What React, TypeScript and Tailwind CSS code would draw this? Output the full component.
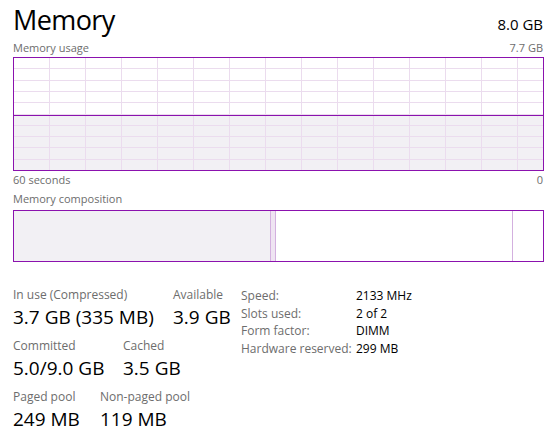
import React from "react";

const font = { fontFamily: '"Open Sans", "Noto Sans", sans-serif' };

function UsageChart() {
  const W = 531;
  const H = 114;
  const vLines: number[] = [];
  for (let x = 36; x < 530; x += 36) vLines.push(x + 0.5);
  const hLines: number[] = [];
  for (let i = 1; i < 10; i++) hLines.push(Math.round(i * 11.3) + 0.5);
  const usageY = 58;
  return (
    <svg width={W} height={H} viewBox={`0 0 ${W} ${H}`} className="block">
      <rect x={0} y={usageY} width={W} height={H - usageY} fill="#f2f0f4" />
      {vLines.map((x) => (
        <line key={"v" + x} x1={x} y1={0} x2={x} y2={H} stroke="#ebdcee" strokeWidth={1} />
      ))}
      {hLines.map((y) => (
        <line key={"h" + y} x1={0} y1={y} x2={W} y2={y} stroke="#ebdcee" strokeWidth={1} />
      ))}
      <line x1={0} y1={usageY + 0.5} x2={W} y2={usageY + 0.5} stroke="#8b12ae" strokeWidth={1} />
      <rect x={0.5} y={0.5} width={W - 1} height={H - 1} fill="none" stroke="#8b12ae" strokeWidth={1} />
    </svg>
  );
}

function Stat({ label, value, width }: { label: string; value: string; width?: string }) {
  return (
    <div className={`flex flex-col ${width ?? ""}`}>
      <div className="text-[12px] leading-[16px] text-[#6d6d6d]">{label}</div>
      <div className="text-[19px] leading-[26px] text-black mt-[1px]">{value}</div>
    </div>
  );
}

export default function App() {
  const rows: [string, string][] = [
    ["Speed:", "2133 MHz"],
    ["Slots used:", "2 of 2"],
    ["Form factor:", "DIMM"],
    ["Hardware reserved:", "299 MB"],
  ];
  return (
    <div className="w-[553px] h-[437px] bg-white overflow-hidden" style={font}>
      <div className="pl-[13px] pr-[10px] pt-[1px] flex flex-col">
        <div className="flex justify-between items-baseline h-[37px]">
          <div className="text-[27px] leading-[37px] font-normal text-black tracking-[-0.6px]">Memory</div>
          <div className="text-[15px] text-black">8.0 GB</div>
        </div>
        <div className="flex justify-between text-[11px] leading-[18px] text-[#6d6d6d] mt-[1px]">
          <span>Memory usage</span>
          <span>7.7 GB</span>
        </div>
        <div>
          <UsageChart />
        </div>
        <div className="flex justify-between text-[11px] leading-[18px] text-[#6d6d6d]">
          <span>60 seconds</span>
          <span>0</span>
        </div>
        <div className="text-[11px] leading-[18px] text-[#6d6d6d] mt-[1px]">Memory composition</div>
        <div className="mt-[2px] h-[52px] w-[531px] border border-[#8b12ae] flex">
          <div className="w-[256px] bg-[#f2f0f4]" />
          <div className="w-[1px] bg-[#d3b0df]" />
          <div className="w-[4px] bg-[#efe4f2]" />
          <div className="w-[1px] bg-[#d3b0df]" />
          <div className="flex-1 bg-white" />
          <div className="w-[1px] bg-[#d3b0df]" />
          <div className="w-[30px] bg-white" />
        </div>
        <div className="flex mt-[25px]">
          <div className="flex flex-col w-[228px] gap-[8px]">
            <div className="flex">
              <Stat label="In use (Compressed)" value="3.7 GB (335 MB)" width="w-[160px]" />
              <Stat label="Available" value="3.9 GB" />
            </div>
            <div className="flex">
              <Stat label="Committed" value="5.0/9.0 GB" width="w-[110px]" />
              <Stat label="Cached" value="3.5 GB" />
            </div>
            <div className="flex">
              <Stat label="Paged pool" value="249 MB" width="w-[87px]" />
              <Stat label="Non-paged pool" value="119 MB" />
            </div>
          </div>
          <div className="flex flex-col">
            {rows.map(([k, v]) => (
              <div key={k} className="flex text-[12px] leading-[17.6px]">
                <span className="w-[115px] text-[#6d6d6d]">{k}</span>
                <span className="text-black">{v}</span>
              </div>
            ))}
          </div>
        </div>
      </div>
    </div>
  );
}
